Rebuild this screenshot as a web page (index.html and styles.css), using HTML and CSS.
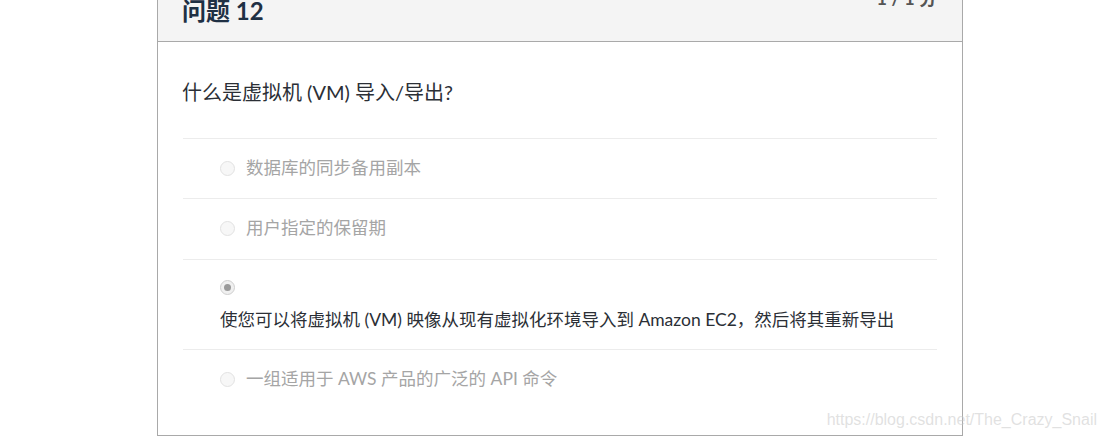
FILE: index.html
```html
<!DOCTYPE html>
<html lang="zh">
<head>
<meta charset="utf-8">
<link rel="stylesheet" href="styles.css">
</head>
<body>
<div class="card">
  <div class="card-head">
    <h2 class="title">问题 12</h2>
    <div class="score">1 / 1 分</div>
  </div>
  <div class="card-body">
    <p class="question">什么是虚拟机 (VM) 导入/导出?</p>
    <div class="option">
      <span class="radio"></span><span class="opt-text">数据库的同步备用副本</span>
    </div>
    <div class="option option-tall">
      <span class="radio"></span><span class="opt-text">用户指定的保留期</span>
    </div>
    <div class="option option-selected">
      <div class="radio-line"><span class="radio radio-checked"></span></div>
      <div class="opt-text-sel">使您可以将虚拟机 (VM) 映像从现有虚拟化环境导入到 Amazon EC2，然后将其重新导出</div>
    </div>
    <div class="option">
      <span class="radio"></span><span class="opt-text">一组适用于 AWS 产品的广泛的 API 命令</span>
    </div>
  </div>
</div>
<div class="watermark">https://blog.csdn.net/The_Crazy_Snail</div>
</body>
</html>
```

FILE: styles.css
```css
html, body {
  margin: 0;
  padding: 0;
  background: #fff;
  overflow: hidden;
}
body {
  font-family: Lato, "Noto Sans CJK SC", sans-serif;
  width: 1106px;
  height: 438px;
  position: relative;
}
.card {
  margin-left: 157px;
  margin-top: -24px;
  width: 804px;
  border: 1px solid #a9a9a9;
  background: #fff;
}
.card-head {
  background: #f4f4f4;
  border-bottom: 1px solid #a9a9a9;
  height: 64px;
  padding: 0 25px 0 24px;
  display: flex;
  justify-content: space-between;
  align-items: flex-start;
}
.title {
  margin: 19px 0 0 0;
  font-size: 24px;
  line-height: 30px;
  font-weight: 700;
  color: #1f3044;
}
.score {
  margin-top: 10px;
  font-size: 18px;
  line-height: 22px;
  font-weight: 700;
  color: #555;
}
.card-body {
  padding: 37px 25px 26px 25px;
}
.question {
  margin: 0 0 33px -1px;
  font-size: 20px;
  line-height: 26px;
  color: #2b2f36;
}
.option {
  border-top: 1px solid #ececec;
  padding: 17px 0 18px 37px;
  display: flex;
  align-items: center;
  min-height: 24px;
}
.option-tall {
  padding-bottom: 19px;
}
.option-selected {
  display: block;
  padding: 17px 0 17px 37px;
}
.radio-line {
  height: 20px;
  display: flex;
  align-items: center;
  margin-bottom: 11px;
}
.radio {
  width: 13px;
  height: 13px;
  border-radius: 50%;
  border: 1px solid #e2e2e2;
  background: #f7f7f7;
  flex: none;
  position: relative;
}
.radio-checked {
  border-color: #cfcfcf;
  background: #f0f0f0;
}
.radio-checked::after {
  content: "";
  position: absolute;
  left: 3px;
  top: 3px;
  width: 7px;
  height: 7px;
  border-radius: 50%;
  background: #9a9a9a;
}
.opt-text {
  margin-left: 11px;
  font-size: 17.5px;
  line-height: 24px;
  color: #a5a5a5;
}
.opt-text-sel {
  font-size: 17.5px;
  line-height: 24px;
  color: #2b2f36;
}
.watermark {
  position: absolute;
  right: 9px;
  top: 410px;
  font-family: "Liberation Sans", Arial, sans-serif;
  font-size: 16px;
  line-height: 20px;
  color: rgba(200, 200, 200, 0.55);
}
```
